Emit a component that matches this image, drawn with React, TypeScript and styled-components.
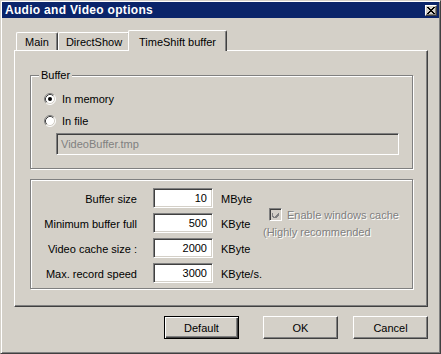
import React from 'react';
import styled, { createGlobalStyle } from 'styled-components';

const GlobalStyle = createGlobalStyle`
  html, body {
    margin: 0;
    padding: 0;
    background: #d4d0c8;
  }
  body {
    font-family: "Liberation Sans", Arial, sans-serif;
    font-size: 11px;
    color: #000;
  }
`;

const Window = styled.div`
  box-sizing: border-box;
  width: 441px;
  height: 354px;
  background: #d4d0c8;
  border: 1px solid;
  border-color: #d4d0c8 #404040 #404040 #d4d0c8;
  box-shadow: inset 1px 1px #fff, inset -1px -1px #808080;
  padding: 1px;
  display: flex;
  flex-direction: column;
`;

const TitleBar = styled.div`
  height: 16px;
  background: #0a246a;
  display: flex;
  align-items: center;
  justify-content: space-between;
  padding: 0 2px 0 3px;
`;

const Title = styled.span`
  color: #fff;
  font-weight: bold;
  font-size: 12px;
  letter-spacing: 0.3px;
  line-height: 16px;
`;

const CloseButton = styled.div`
  box-sizing: border-box;
  width: 12px;
  height: 11px;
  background: #d4d0c8;
  border: 1px solid;
  border-color: #fff #404040 #404040 #fff;
  box-shadow: inset -1px -1px #808080;
  display: flex;
  align-items: center;
  justify-content: center;
`;

const Body = styled.div`
  display: flex;
  flex-direction: column;
  padding: 12px 11px 0 12px;
`;

const TabStrip = styled.div`
  display: flex;
  align-items: flex-end;
  height: 20px;
  padding-left: 2px;
`;

const Tab = styled.div<{ $width: number; $active?: boolean }>`
  box-sizing: border-box;
  position: relative;
  z-index: ${p => (p.$active ? 1 : 0)};
  width: ${p => (p.$active ? p.$width + 4 : p.$width)}px;
  height: ${p => (p.$active ? 21 : 18)}px;
  margin: ${p => (p.$active ? '0 -2px -1px -2px' : '0')};
  padding-top: ${p => (p.$active ? 2 : 0)}px;
  background: #d4d0c8;
  border-top: 1px solid #fff;
  border-left: 1px solid #fff;
  border-right: 1px solid #404040;
  border-radius: 2px 2px 0 0;
  box-shadow: inset -1px 0 #808080;
  display: flex;
  align-items: center;
  justify-content: center;
  white-space: nowrap;
`;

const Panel = styled.div`
  box-sizing: border-box;
  height: 257px;
  border: 1px solid;
  border-color: #fff #404040 #404040 #fff;
  box-shadow: inset -1px -1px #808080;
  padding: 24px 14px 0 15px;
  display: flex;
  flex-direction: column;
  gap: 10px;
`;

const Group = styled.div<{ $height: number }>`
  position: relative;
  box-sizing: border-box;
  height: ${p => p.$height}px;
  border: 1px solid #808080;
  box-shadow: 1px 1px #fff, inset 1px 1px #fff;
`;

const GroupLabel = styled.span`
  position: absolute;
  top: -7px;
  left: 8px;
  padding: 0 2px;
  line-height: 13px;
  background: #d4d0c8;
`;

const RadioList = styled.div`
  display: flex;
  flex-direction: column;
  gap: 6px;
  padding: 15px 0 0 13px;
`;

const RadioRow = styled.div`
  display: flex;
  align-items: center;
  gap: 6px;
  height: 16px;
`;

const Edit = styled.div<{ $width: number; $disabled?: boolean; $right?: boolean }>`
  box-sizing: border-box;
  width: ${p => p.$width}px;
  height: ${p => (p.$disabled ? 22 : 20)}px;
  border: 1px solid;
  border-color: #808080 #fff #fff #808080;
  box-shadow: inset 1px 1px #404040, inset -1px -1px #d4d0c8;
  background: ${p => (p.$disabled ? '#d4d0c8' : '#fff')};
  color: ${p => (p.$disabled ? '#808080' : '#000')};
  text-align: ${p => (p.$right ? 'right' : 'left')};
  padding: 1px 5px 0 4px;
  line-height: ${p => (p.$disabled ? 19 : 17)}px;
  white-space: nowrap;
`;

const FileEdit = styled(Edit)`
  margin: 4px 0 0 25px;
`;

const SettingsLayout = styled.div`
  display: flex;
  padding-top: 8px;
`;

const FieldGrid = styled.div`
  display: grid;
  grid-template-columns: 122px 68px 42px;
  row-gap: 5px;
`;

const FieldLabel = styled.div`
  padding: 3px 16px 0 0;
  text-align: right;
  line-height: 17px;
  white-space: nowrap;
`;

const Unit = styled.div`
  padding-top: 3px;
  line-height: 17px;
  white-space: nowrap;
`;

const CacheBox = styled.div`
  display: flex;
  flex-direction: column;
  padding-top: 20px;
`;

const CheckRow = styled.div`
  display: flex;
  align-items: center;
  gap: 5px;
  height: 13px;
  padding-left: 6px;
`;

const Checkbox = styled.div`
  box-sizing: border-box;
  width: 13px;
  height: 13px;
  border: 1px solid;
  border-color: #808080 #fff #fff #808080;
  box-shadow: inset 1px 1px #404040, inset -1px -1px #d4d0c8;
  background: #d4d0c8;
  display: flex;
  align-items: center;
  justify-content: center;
`;

const DisabledText = styled.span`
  color: #808080;
  text-shadow: 1px 1px #fff;
  line-height: 14px;
  white-space: nowrap;
`;

const Note = styled(DisabledText)`
  margin-top: 4px;
`;

const ButtonRow = styled.div`
  display: flex;
  justify-content: flex-end;
  margin-top: 9px;
`;

const Button = styled.div<{ $default?: boolean; $space: number }>`
  box-sizing: border-box;
  width: 75px;
  height: 23px;
  margin-left: ${p => p.$space}px;
  background: #d4d0c8;
  border: 1px solid;
  border-color: ${p => (p.$default ? '#000' : '#fff #404040 #404040 #fff')};
  box-shadow: ${p =>
    p.$default
      ? 'inset 1px 1px #fff, inset -1px -1px #404040, inset -2px -2px #808080'
      : 'inset -1px -1px #808080'};
  display: flex;
  align-items: center;
  justify-content: center;
`;

const Radio = ({ checked }: { checked?: boolean }) => (
  <svg width="12" height="12" viewBox="0 0 12 12">
    <circle cx="6" cy="6" r="5" fill="#fff" />
    <path d="M2.11 9.89 A5.5 5.5 0 0 1 9.89 2.11" stroke="#808080" fill="none" />
    <path d="M9.89 2.11 A5.5 5.5 0 0 1 2.11 9.89" stroke="#fff" fill="none" />
    <path d="M2.82 9.18 A4.5 4.5 0 0 1 9.18 2.82" stroke="#404040" fill="none" />
    <path d="M9.18 2.82 A4.5 4.5 0 0 1 2.82 9.18" stroke="#d4d0c8" fill="none" />
    {checked && <circle cx="6" cy="6" r="2" fill="#000" />}
  </svg>
);

const CheckMark = () => (
  <svg width="7" height="7" viewBox="0 0 7 7" shapeRendering="crispEdges">
    <path d="M0 2h1v3h1v1h1v-1h1v-1h1v-1h1v-1h1v3h-1v1h-1v1h-1v1h-2v-1h-1v-1h-1z" fill="#808080" />
  </svg>
);

const CloseGlyph = () => (
  <svg width="8" height="7" viewBox="0 0 8 7" shapeRendering="crispEdges">
    <path d="M0 0h2v1h1v1h2v-1h1v-1h2v1h-1v1h-1v1h-1v1h1v1h1v1h1v1h-2v-1h-1v-1h-2v1h-1v1h-2v-1h1v-1h1v-1h1v-1h-1v-1h-1v-1h-1z" fill="#000" />
  </svg>
);

const fields = [
  { label: 'Buffer size', value: '10', unit: 'MByte' },
  { label: 'Minimum buffer full', value: '500', unit: 'KByte' },
  { label: 'Video cache size :', value: '2000', unit: 'KByte' },
  { label: 'Max. record speed', value: '3000', unit: 'KByte/s.' },
];

export default function App() {
  return (
    <>
      <GlobalStyle />
      <Window>
        <TitleBar>
          <Title>Audio and Video options</Title>
          <CloseButton>
            <CloseGlyph />
          </CloseButton>
        </TitleBar>
        <Body>
          <TabStrip>
            <Tab $width={42}>Main</Tab>
            <Tab $width={72}>DirectShow</Tab>
            <Tab $width={95} $active>TimeShift buffer</Tab>
          </TabStrip>
          <Panel>
            <Group $height={94}>
              <GroupLabel>Buffer</GroupLabel>
              <RadioList>
                <RadioRow>
                  <Radio checked />
                  In memory
                </RadioRow>
                <RadioRow>
                  <Radio />
                  In file
                </RadioRow>
              </RadioList>
              <FileEdit $width={343} $disabled>VideoBuffer.tmp</FileEdit>
            </Group>
            <Group $height={110}>
              <SettingsLayout>
                <FieldGrid>
                  {fields.map(f => (
                    <React.Fragment key={f.label}>
                      <FieldLabel>{f.label}</FieldLabel>
                      <div>
                        <Edit $width={60} $right>{f.value}</Edit>
                      </div>
                      <Unit>{f.unit}</Unit>
                    </React.Fragment>
                  ))}
                </FieldGrid>
                <CacheBox>
                  <CheckRow>
                    <Checkbox>
                      <CheckMark />
                    </Checkbox>
                    <DisabledText>Enable windows cache</DisabledText>
                  </CheckRow>
                  <Note>(Highly recommended</Note>
                </CacheBox>
              </SettingsLayout>
            </Group>
          </Panel>
          <ButtonRow>
            <Button $default $space={0}>Default</Button>
            <Button $space={24}>OK</Button>
            <Button $space={15}>Cancel</Button>
          </ButtonRow>
        </Body>
      </Window>
    </>
  );
}
